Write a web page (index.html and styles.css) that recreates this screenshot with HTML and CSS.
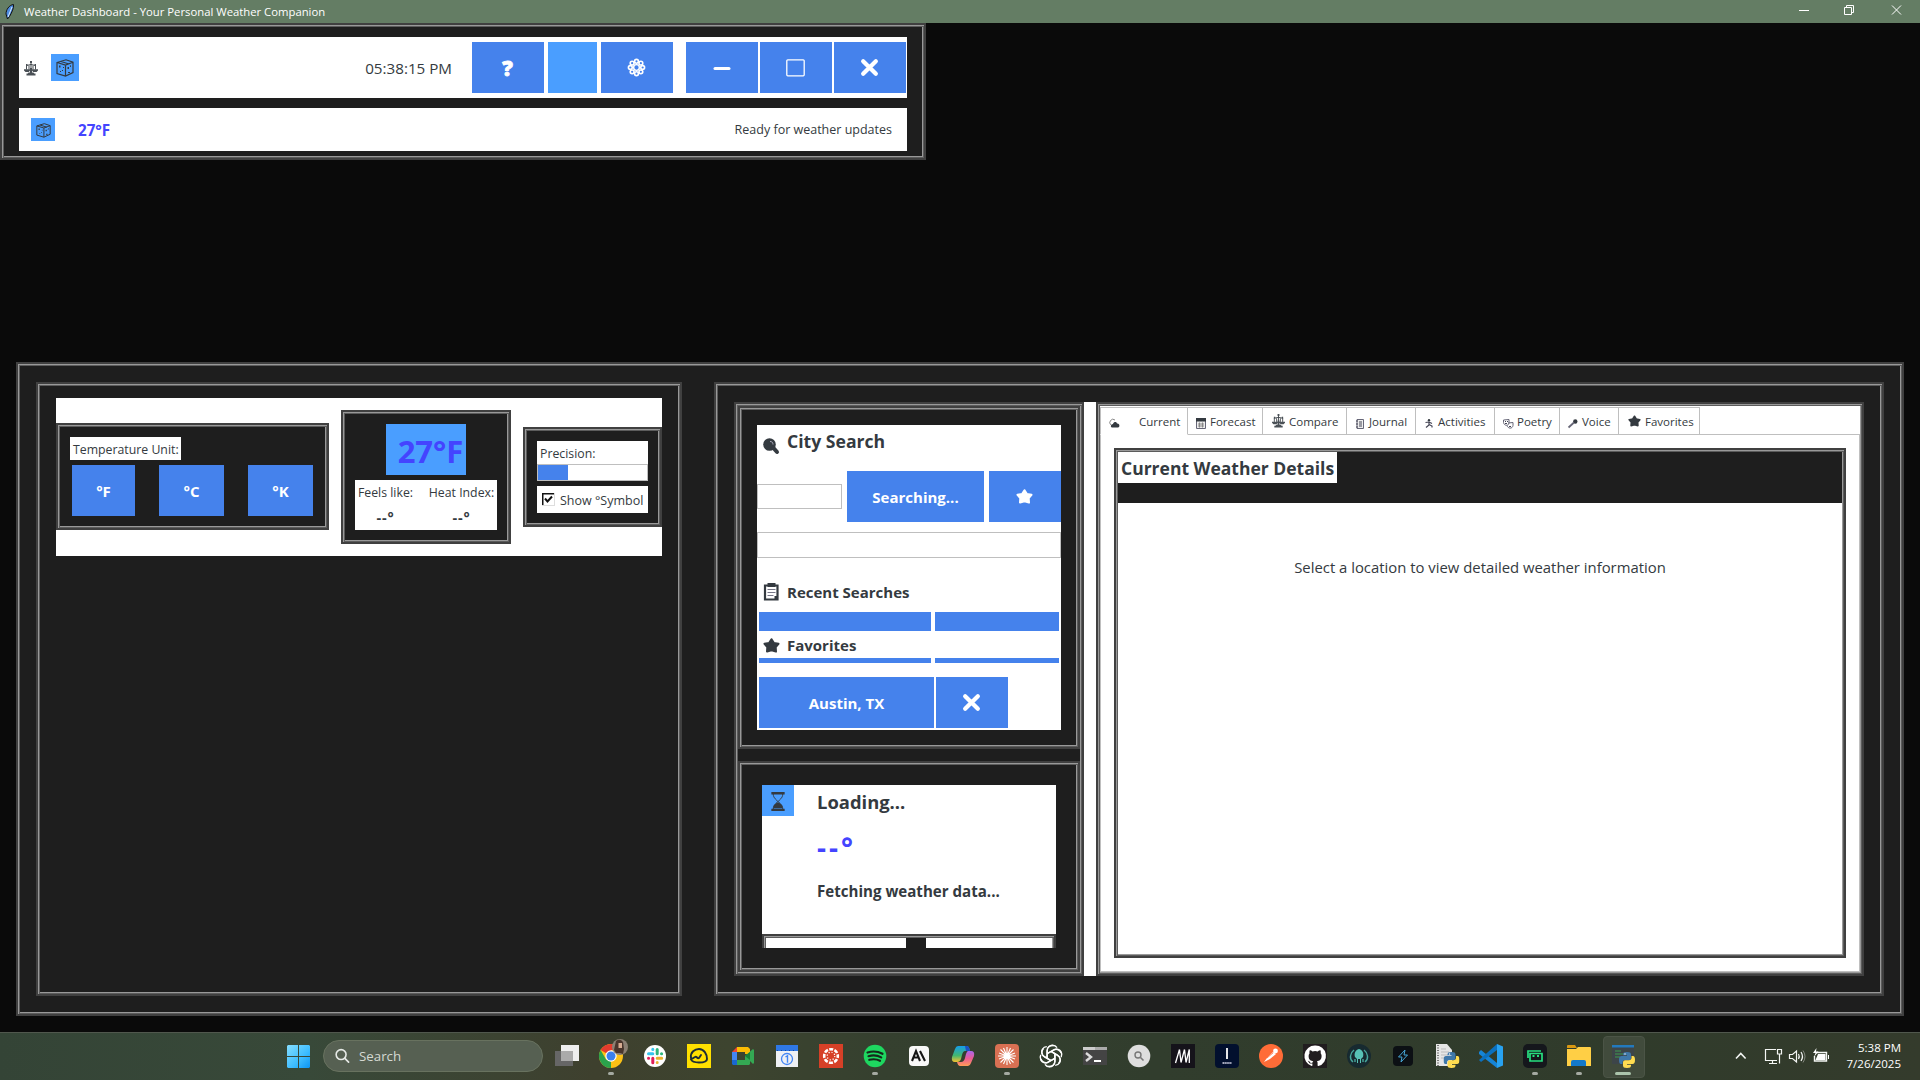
FILE: index.html
```html
<!DOCTYPE html>
<html lang="en">
<head>
<meta charset="utf-8">
<title>Weather Dashboard - Your Personal Weather Companion</title>
<link rel="stylesheet" href="styles.css">
</head>
<body>
<svg class="defs" aria-hidden="true">
  <symbol id="cube" viewBox="0 0 18 18"><path d="M1 3.500 10 .8 17 3.200V13.500L9.500 17 1 14.500ZM1 3.500 9.500 6 17 3.200M9.500 6V17M5 2.500 13 5" fill="none" stroke="#343a40" stroke-width="1.200"/><path d="M3 6.500h1.500v2H3zM6 11h1v1H6zM4 12h1v1H4zM11.500 8H13v2h-1.500zM14.500 6H15v2h-1zM12 13h2v1h-2zM7 8h1v1H7z" fill="#343a40"/></symbol>
  <symbol id="scales" viewBox="0 0 14 15"><path d="M7 1v10M2.500 4.500 7 3.500l4.500 1M2.500 4.500v4M11.500 4.500v4M5 4.500v4M9 4.500v4" fill="none" stroke="#343a40" stroke-width=".9"/><path d="M6 0h2v2H6zM2 3h1.500v2H2zM10.500 3H12v2h-1.500zM0 8.300h6V9.500L4.800 11H1.500L0 9.500zM8 8.300h6v1.200L12.500 11H9.200L8 9.500zM4.500 11.500h5l.7 1h1.300V14.500h-9V12.500h1.300zM6 7h2v5H6z" fill="#4a5056"/></symbol>
  <symbol id="star" viewBox="0 0 17 15"><path d="M8.500 1.200 10.800 4.900 15.500 5.800 12.700 9.200 13 13.600 8.500 12.400 4 13.600 4.300 9.200 1.500 5.800 6.200 4.900Z" fill="currentColor" stroke="currentColor" stroke-width="2" stroke-linejoin="round"/></symbol>
  <symbol id="cross" viewBox="0 0 18 18"><path d="M3 3 15 15M15 3 3 15" fill="none" stroke="#fff" stroke-width="4" stroke-linecap="round"/></symbol>
  <symbol id="python" viewBox="0 0 16 16"><path d="M8 0c3 0 4 .8 4 2.500V6c0 1.500-1 2-2 2H6c-1.500 0-2.500 1-2.500 2.500V12H2C.6 12 0 10.500 0 8s.8-4 2.500-4H8V3.300H4V2.500C4 .8 5 0 8 0" fill="#3f78aa"/><path d="M8 16c-3 0-4-.8-4-2.500V10.500C4 9 5 8.300 6 8.300h4C11.500 8.300 12.500 7 12.500 5.800V4H14c1.400 0 2 1.500 2 4s-.8 4-2.500 4H8v.7h4v.8C12 15.200 11 16 8 16" fill="#ffdc50"/><circle cx="6" cy="2" r=".7" fill="#fff"/></symbol>
</svg>

<header class="titlebar">
  <svg class="feather" viewBox="0 0 10 16"><path d="M2.500 15 1 10C1 6 4 1 8.500.5 9 4 7 8 4.500 12.500Z" fill="#4c8be0" stroke="#111" stroke-width="1"/><path d="M3 13 7 3" stroke="#dcecff" stroke-width="1"/></svg>
  <span class="titlebar-text">Weather Dashboard - Your Personal Weather Companion</span>
  <svg class="caption" viewBox="0 0 102 12"><path d="M0 6.500h10M93 1.500l9 9M102 1.500l-9 9" stroke="#fff" fill="none"/><path d="M45.500 3.500h7v7h-7zM47.500 3V1.500h7V8.500H53" stroke="#fff" fill="none"/></svg>
</header>

<section class="groove header">
  <div class="toolbar">
    <svg class="tool-scales"><use href="#scales"/></svg>
    <span class="chip chip-lg"><svg><use href="#cube"/></svg></span>
    <span class="clock">05:38:15 PM</span>
    <div class="tools">
      <button class="btn sq"><b class="question">?</b></button>
      <span class="swatch"></span>
      <button class="btn sq"><svg class="flower" width="19" height="19" viewBox="0 0 20 20" fill="none" stroke="#fff"><circle cx="10" cy="10" r="3" stroke-width="1.500"/><g stroke-width="1.700"><circle cx="10" cy="3.500" r="2"/><circle cx="14.600" cy="5.400" r="2"/><circle cx="16.500" cy="10" r="2"/><circle cx="14.600" cy="14.600" r="2"/><circle cx="10" cy="16.500" r="2"/><circle cx="5.400" cy="14.600" r="2"/><circle cx="3.500" cy="10" r="2"/><circle cx="5.400" cy="5.400" r="2"/></g></svg></button>
    </div>
    <div class="window-tools">
      <button class="btn sq"><svg width="18" height="18" viewBox="0 0 18 18"><path d="M2 9.500h14" stroke="#fff" stroke-width="3" stroke-linecap="round"/></svg></button>
      <button class="btn sq"><svg class="box" width="19" height="18" viewBox="0 0 19 18"><rect x=".8" y=".8" width="17.400" height="16" rx="1" fill="none" stroke="#fff" stroke-width="1.300"/></svg></button>
      <button class="btn sq"><svg class="cross" width="19" height="19"><use href="#cross"/></svg></button>
    </div>
  </div>
  <div class="statusbar">
    <span class="chip chip-sm"><svg><use href="#cube"/></svg></span>
    <span class="status-temp">27°F</span>
    <span class="status-text">Ready for weather updates</span>
  </div>
</section>

<main class="groove dashboard">
  <section class="groove left-panel">
    <div class="controls">
      <div class="groove units">
        <span class="label unit-label">Temperature Unit:</span>
        <div class="unit-row">
          <button class="btn unit-f">°F</button><button class="btn unit">°C</button><button class="btn unit">°K</button>
        </div>
      </div>
      <div class="groove reading">
        <div class="big-temp">27°F</div>
        <div class="feels">
          <span class="small">Feels like:</span><span class="small">Heat Index:</span>
          <b class="dash">--°</b><b class="dash">--°</b>
        </div>
      </div>
      <div class="groove precision">
        <div class="label precision-label">Precision:</div>
        <div class="meter"><i></i></div>
        <div class="check-row">
          <svg width="13" height="13" viewBox="0 0 13 13"><path d="M0 0h13v13H0z" fill="#ddd"/><path d="M0 0h12v12H0z" fill="#111"/><path d="M1.500 1.500H12V12H1.500z" fill="#fff"/><path d="M3 5.500 5.500 8.500 10 3.500" fill="none" stroke="#111" stroke-width="2"/></svg>
          <span>Show °Symbol</span>
        </div>
      </div>
    </div>
  </section>

  <section class="groove right-panel">
    <div class="groove side">
      <div class="groove search-frame">
        <div class="search-card">
          <div class="heading h-city"><svg width="18" height="16" viewBox="0 0 18 16"><circle cx="6.500" cy="6.500" r="6.300" fill="#343a40"/><path d="m10.500 10 3.500 4" stroke="#343a40" stroke-width="4" stroke-linecap="round"/><path d="M7 3.500c2 0 3 1 3 3" stroke="#aab" fill="none"/></svg><span>City Search</span></div>
          <div class="search-row"><span class="entry"></span><button class="btn searching">Searching...</button><button class="btn sq"><svg class="white-star"><use href="#star"/></svg></button></div>
          <div class="listbox"></div>
          <div class="heading h-recent"><svg width="18" height="18" viewBox="0 0 18 18"><path d="M2 2.500h12.500v14H2z" fill="#fff" stroke="#343a40" stroke-width="2.200"/><path d="M4.500 0h8v4h-8zM11.500 13h3v3h-3z" fill="#343a40"/><path d="M4.500 6.500h8M4.500 9.500h8M4.500 12.500h6" stroke="#778"/></svg><span>Recent Searches</span></div>
          <div class="bars tall"><i></i><i></i></div>
          <div class="heading h-fav"><svg class="dark-star"><use href="#star"/></svg><span>Favorites</span></div>
          <div class="bars thin"><i></i><i></i></div>
          <div class="fav-row"><button class="btn city">Austin, TX</button><button class="btn sq"><svg class="cross" width="19" height="19"><use href="#cross"/></svg></button></div>
        </div>
      </div>
      <div class="groove weather-frame">
        <div class="weather-card">
          <span class="hourglass"><svg width="14" height="19" viewBox="0 0 14 20"><path d="M0 0h14v2.500H0zM0 17.500h14V20H0zM2 17c0-4 3-5 4.500-6h1C9 12 12 13 12 17z" fill="#343a40"/><path d="M2 2c0 5 4 6 4.500 8C6 12 2 13 2 18M12 2c0 5-4 6-4.500 8 .5 2 4.500 3 4.500 8" fill="none" stroke="#343a40"/></svg></span>
          <div class="loading">
            <span class="loading-title">Loading...</span>
            <span class="loading-temp">--°</span>
            <span class="loading-text">Fetching weather data...</span>
          </div>
        </div>
        <div class="metrics"><i></i><i></i></div>
      </div>
    </div>

    <div class="groove notebook">
      <nav class="tabs">
        <span class="tab current"><svg width="10" height="9" viewBox="0 0 10 9"><path d="M1 6A3 3 0 0 1 5 1" fill="none" stroke="#888"/><path d="M2 8.500C0 8 1 5 3 5c1-3 4-2 4-.5 3-.5 3 4 1 4z" fill="#343a40"/></svg><span>Current</span></span>
        <span class="tab forecast"><svg width="10" height="11" viewBox="0 0 10 11"><path d="M.5 1h9v9.500h-9z" fill="#eee" stroke="#667"/><path d="M0 0h10v3.500H0z" fill="#343a40"/><path d="M2 6h6M2 8h6M3.500 4.500v5M6.500 4.500v5" stroke="#888"/></svg><span>Forecast</span></span>
        <span class="tab compare"><svg width="13" height="14"><use href="#scales"/></svg><span>Compare</span></span>
        <span class="tab journal"><svg width="8" height="10" viewBox="0 0 8 10"><path d="M1 .5h6.500v9H1z" fill="#eee" stroke="#667"/><path d="M0 2h2M0 5h2M0 8h2M3 3h3M3 5h3M3 7h3" stroke="#445"/></svg><span>Journal</span></span>
        <span class="tab activities"><svg width="9" height="9" viewBox="0 0 9 9"><circle cx="4" cy="1.300" r="1.200" fill="#343a40"/><path d="M.5 3.500 4 3l3 1.500M4 3v3L1 8.500M4 5.500 7 7v1.500" fill="none" stroke="#445" stroke-width="1.200"/></svg><span>Activities</span></span>
        <span class="tab poetry"><svg width="11" height="10" viewBox="0 0 11 10"><path d="M.5 1 6 .5v3c0 4-5 3.500-5.500 0zM5 4l5-.5v3C9.500 10 5 10 4 6.500" fill="#fff" stroke="#667"/><path d="M2 2.500h1M4 2.500h1M2 4.500h2M6 7.500h2" stroke="#445"/></svg><span>Poetry</span></span>
        <span class="tab voice"><svg width="10" height="9" viewBox="0 0 10 9"><circle cx="7.300" cy="2.500" r="2.200" fill="#343a40"/><path d="M.5 8.500 6 3.500" stroke="#667" stroke-width="1.800"/></svg><span>Voice</span></span>
        <span class="tab favs"><svg width="13" height="12"><use href="#star"/></svg><span>Favorites</span></span>
        <span class="tab-fill"></span>
      </nav>
      <div class="page">
        <div class="groove details">
          <div class="details-head"><h2>Current Weather Details</h2></div>
          <p class="placeholder">Select a location to view detailed weather information</p>
        </div>
      </div>
    </div>
  </section>
</main>

<footer class="taskbar">
  <svg class="start" viewBox="0 0 23 23"><defs><linearGradient id="win" x1="0" y1="0" x2="23" y2="23" gradientUnits="userSpaceOnUse"><stop stop-color="#85deff"/><stop offset=".6" stop-color="#3cbcff"/><stop offset="1" stop-color="#0c94f4"/></linearGradient></defs><path d="M1 0h10v11H0V1zM12 0h10l1 1v10H12zM0 12h11v11H1l-1-1zM12 12h11v10l-1 1H12z" fill="url(#win)"/></svg>
  <div class="search-pill"><svg width="15" height="16" viewBox="0 0 16 16"><circle cx="6.500" cy="6.500" r="5.300" fill="none" stroke="#e6e9e6" stroke-width="1.700"/><path d="m10.500 10.500 4 4" stroke="#e6e9e6" stroke-width="1.800" stroke-linecap="round"/></svg><span>Search</span></div>
  <div class="apps">
    <span class="app"><svg viewBox="0 0 24 24"><path d="M6 1h18v16H6z" fill="#eee"/><path d="M0 7h18v15H0z" fill="#666"/><path d="M6 7h12v10H6z" fill="#aaa"/></svg></span>
    <span class="app run"><svg viewBox="0 0 24 24"><circle cx="12" cy="12" r="12" fill="#fbc116"/><path d="M12 12 1.600 6A12 12 0 0 1 22.400 6H12z" fill="#e33b2e"/><path d="M1.600 6 7 15.500l5 2L12 24A12 12 0 0 1 1.600 6" fill="#2ba24c"/><circle cx="12" cy="12" r="5.700" fill="#fff"/><circle cx="12" cy="12" r="4.500" fill="#3b80ee"/><circle cx="21" cy="3" r="8" fill="#8b8074"/><path d="M17-3q4-3 7 1l1 7-1 5-3-1-4 0-2-3z" fill="#49352c"/><path d="M19.500-1h3.500v5h-3.500z" fill="#d6ac92"/></svg></span>
    <span class="app"><svg viewBox="0 0 24 24"><circle cx="12" cy="12" r="11" fill="#fff"/><g stroke-width="3" stroke-linecap="round"><path d="M5.500 9.800h4.300M9.800 5.300v.1" stroke="#36c5f0"/><path d="M14.200 5.500v4.300M18.500 9.800h.1" stroke="#2eb67d"/><path d="M14.200 14.200h4.500M14.200 18.500v.1" stroke="#ecb22e"/><path d="M9.800 14.200v4.500M5.500 14.200h.1" stroke="#e01e5a"/></g></svg></span>
    <span class="app"><svg viewBox="0 0 24 24"><path d="M0 0h24v24H0z" fill="#ffe000"/><path d="M4 14C3 8 8 5 12 5c5 0 8 5 8 10 0 3-3 3.500-8 3.500-4 0-7-.5-8-3l4-2.500c2-1 2 2 4 1l2-3" fill="none" stroke="#1d2d35" stroke-width="1.900" stroke-linecap="round"/></svg></span>
    <span class="app"><svg viewBox="0 0 24 24"><path d="M1 8 6 3v5z" fill="#ea4335"/><path d="M6 3h11l2 2v5h-5V8H6z" fill="#fbbc04"/><path d="M1 8h5v8H1z" fill="#4285f4"/><path d="M1 16h5v5H2l-1-1z" fill="#1967d2"/><path d="M6 16h8v-4h5v8l-1 1H6zM14 12l8-7 1 1v13l-1 1z" fill="#34a853"/><path d="m14 12 5-4v8z" fill="#188038"/></svg></span>
    <span class="app"><svg viewBox="0 0 24 24"><path d="M1 6h22v17H1z" fill="#eef0f4"/><path d="M1 1h22v6H1z" fill="#2f78e6"/><path d="M2 6.500h20" stroke="#194a9c" stroke-dasharray="1 3"/><circle cx="12" cy="15" r="5.500" fill="none" stroke="#4285f4" stroke-width="1.300"/><path d="m10.500 13 2-1.300v7" fill="none" stroke="#4285f4" stroke-width="1.400"/></svg></span>
    <span class="app"><svg viewBox="0 0 24 24"><path d="M0 0h24v24H0z" fill="#d64027"/><circle cx="12" cy="12" r="6.800" fill="none" stroke="#fff" stroke-width="2.600" stroke-dasharray="4 1.340" stroke-dashoffset="2"/><circle cx="12" cy="12" r="3.800" fill="none" stroke="#fff" stroke-width="1.200" stroke-dasharray="1.200 1.784"/></svg></span>
    <span class="app run"><svg viewBox="0 0 24 24"><circle cx="12" cy="12" r="11.300" fill="#1ed760"/><path d="M4.500 8.500q8-2.500 15 1.300M5.500 12.200q7-2 12.700 1.200M6.300 15.800q6-1.500 10.700 1" fill="none" stroke="#15291b" stroke-width="2.200" stroke-linecap="round"/></svg></span>
    <span class="app"><svg viewBox="0 0 24 24"><rect x="2" y="2" width="20" height="20" rx="4" fill="#f8f8f8"/><path d="m5 17 4-10 4 10M6.500 13.500h5M13 7l5 10" fill="none" stroke="#161616" stroke-width="2.100"/></svg></span>
    <span class="app"><svg viewBox="0 0 24 24"><defs><linearGradient id="cpa" x2="0" y2="1"><stop stop-color="#159dea"/><stop offset=".6" stop-color="#43b86f"/><stop offset="1" stop-color="#f8c130"/></linearGradient><linearGradient id="cpb" x2="0" y2="1"><stop stop-color="#a866ed"/><stop offset=".5" stop-color="#eb5b94"/><stop offset="1" stop-color="#ff9c55"/></linearGradient></defs><path d="M7 2h9q2 0 3 5h-5q-2 0-3 4l-1 4q-1 3-4 3H4q-4 0-3-5L4 5q1-3 3-3" fill="url(#cpa)"/><path d="M14 2h2q2 0 3 5h-4z" fill="#1b50c5"/><path d="M17 7h3q4 0 3 5l-3 7q-1 3-3 3H9q-2 0-3-4h4q3 0 4-4l1-4q1-3 2-3" fill="url(#cpb)"/></svg></span>
    <span class="app run"><svg viewBox="0 0 24 24"><rect width="24" height="24" rx="4" fill="#d97053"/><path d="M12 3v18M3 12h18M5.500 5.500l13 13M18.500 5.500l-13 13M8.500 4l7 16M15.500 4l-7 16M4 9l16 6M4 15l16-6" stroke="#fff" stroke-width="1.100"/></svg></span>
    <span class="app"><svg viewBox="0 0 24 24"><g fill="none" stroke="#fff" stroke-width="1.400"><path id="petal" d="M8.200 14V6.500C8.200 3 11 1.200 13.500 1.200c2 0 3.600 1 4.500 2.500M8.200 9.500 14.500 6c3.500-2 7 .5 7.600 3"/><use href="#petal" transform="rotate(60 12 12)"/><use href="#petal" transform="rotate(120 12 12)"/><use href="#petal" transform="rotate(180 12 12)"/><use href="#petal" transform="rotate(240 12 12)"/><use href="#petal" transform="rotate(300 12 12)"/></g></svg></span>
    <span class="app"><svg viewBox="0 0 24 24"><path d="M0 3h24v18H0z" fill="#444"/><path d="M0 3h24v3H0z" fill="#aaa"/><path d="M0 3h12v3H0z" fill="#ccc"/><path d="m3 9 5 4-5 4" fill="none" stroke="#ddd" stroke-width="2.400"/><path d="M11 17h7" stroke="#fff" stroke-width="2"/></svg></span>
    <span class="app"><svg viewBox="0 0 24 24"><circle cx="12" cy="12" r="11.300" fill="#dedede"/><circle cx="11" cy="11" r="3" fill="none" stroke="#777" stroke-width="1.400"/><path d="m13.500 13.500 3 3" stroke="#777" stroke-width="1.600"/></svg></span>
    <span class="app"><svg viewBox="0 0 24 24"><path d="M0 0h24v24H0z" fill="#15131a"/><path d="M4.500 19 8.500 5.500M10 18.500 13.500 5.500M8.500 5.500 10 18.500M13.500 5.500 15 18.500M15 18.500l3.300-13V19" fill="none" stroke="#fff" stroke-width="1.300"/></svg></span>
    <span class="app"><svg viewBox="0 0 24 24"><rect width="24" height="24" rx="4" fill="#02102e"/><path d="M12 4v11" stroke="#fff" stroke-width="1.800"/><path d="M7.500 19h9" stroke="#dde" stroke-width="1.500" stroke-dasharray="1.500 .4"/></svg></span>
    <span class="app"><svg viewBox="0 0 24 24"><circle cx="12" cy="12" r="12" fill="#ff6c37"/><path d="m5 18 3-4 6-6 3 2-6 5z" fill="#fff"/><circle cx="16.500" cy="7" r="2.400" fill="#fff"/><path d="m8 14 6-5" stroke="#ff6c37" stroke-width=".7"/></svg></span>
    <span class="app"><svg viewBox="0 0 24 24"><path d="M0 0h24v24H0z" fill="#211d1f"/><path d="M12 1.500a10.500 10.500 0 0 0-3.300 20.500c.5.100.7-.2.700-.5v-2c-3 .6-3.600-1.300-3.600-1.300-.5-1.200-1.200-1.500-1.200-1.500 1.500-.2 2 1 2 1 1 1.600 2.500 1.200 3 .9 0-.7.400-1.200.7-1.500-2.400-.3-4.700-1.200-4.700-5.100 0-1.200.4-2 1-2.800-.1-.4-.4-1.400.1-2.800 0 0 1-.3 2.800 1a10 10 0 0 1 5.200 0c1.900-1.300 2.800-1 2.800-1 .5 1.400.2 2.400.1 2.800.6.800 1 1.600 1 2.800 0 4-2.400 4.800-4.700 5.100.4.400.7 1 .7 2v2.500c0 .3.200.6.700.5A10.500 10.500 0 0 0 12 1.500" fill="#fff"/></svg></span>
    <span class="app"><svg viewBox="0 0 24 24"><circle cx="12" cy="12" r="12" fill="#172a30"/><path d="M8 13c-1-3 0-7 4-8 4 1 5 5 4 8l-2 2v4h-1v-4h-2v4h-1v-4z" fill="#57c2b6"/><path d="M7 6c-4 3-5 9-1 12M17 6c4 3 5 9 1 12M8 15v3M16 15v3" fill="none" stroke="#47a69c" stroke-width="1.400"/></svg></span>
    <span class="app"><svg viewBox="0 0 24 24"><rect x="2" y="2" width="20" height="20" rx="4" fill="#0c1014"/><path d="M14 6 7.500 13H11l-1 5 6.500-7H13z" fill="none" stroke="#46a6d6"/></svg></span>
    <span class="app"><svg viewBox="0 0 24 24"><path d="M1 0h11l5 6v16H1z" fill="#e6e6e6"/><path d="M3 1v21" stroke="#777" stroke-dasharray="1 1.500" stroke-width="2"/><path d="M6 8h8M6 11h7M6 14h4M6 5h5" stroke="#bbb"/><use href="#python" x="8.500" y="8" width="16" height="16"/></svg></span>
    <span class="app"><svg viewBox="0 0 24 24"><path d="M0 8 2 6l16 13v5L0 10z" fill="#1684d6"/><path d="M0 16 18 0v6L2 18z" fill="#0b70bf"/><path d="m18 0 6 2.500v19L18 24z" fill="#28a2f1"/></svg></span>
    <span class="app run"><svg viewBox="0 0 24 24"><rect width="24" height="24" rx="5" fill="#15171c"/><path d="M5 14V7h13M7 9.500h12V17H7z" fill="none" stroke="#26e07f" stroke-width="1.700"/><path d="M9.500 12h2M14 12h2" stroke="#26e07f" stroke-width="1.800"/></svg></span>
    <span class="app run"><svg viewBox="0 0 24 24"><path d="M0 2q0-1 1-1h7l2 3h-10z" fill="#d89812"/><path d="M0 5h9l2-2h12q1 0 1 1v18H0z" fill="#ffcf45"/><path d="M4 22v-4q0-2 2-2h11q2 0 2 2v4z" fill="#1479cb"/></svg></span>
    <span class="app run active"><svg viewBox="0 0 24 24"><path d="M1 1h22v19H1z" fill="#3d4549"/><path d="M1 1h22v2.500H1z" fill="#2379bd"/><path d="M4 7h6M4 10h9M4 13h5" stroke="#3e7f4d" stroke-width="1.300"/><use href="#python" x="8" y="8" width="16" height="16"/></svg></span>
  </div>
  <svg class="tray" viewBox="0 0 94 18" fill="none" stroke="#f4f6f4"><path d="m1 11.500 4.800-5 4.800 5" stroke-width="1.600"/><path d="M41 2.500H30.500v11H42M37.500 13.500v3M34 16.500h8M42.500 2.500h4v4.500h-4zM44.500 7v9.500" stroke-width="1.200"/><path d="M54.500 7.500h3l4-3.500v11l-4-3.500h-3zM63.500 7q1.500 2.500 0 5M66 5q3 4.500 0 9" stroke-width="1.200"/><path d="M68 3.500q4 6 0 12" opacity=".4"/><path d="M82 5.500h9.500v8.500H79.500v-5" stroke-width="1.400"/><path d="M83 7h7.500v6h-10zM93 8h1v4h-1z" fill="#fff" stroke="none"/><path d="m81.500 1-3.500 5h2.500l-1.500 4 4.500-5.500h-2.500z" fill="#fff" stroke="none"/></svg>
  <div class="datetime"><span>5:38 PM</span><span>7/26/2025</span></div>
</footer>
</body>
</html>
```
FILE: styles.css
```css
* { box-sizing: border-box; }

body {
  margin: 0;
  width: 1920px;
  height: 1080px;
  overflow: hidden;
  display: flex;
  flex-direction: column;
  background: #0a0a0a;
  color: #343a40;
  font-family: "Open Sans", "Noto Sans", sans-serif;
  font-size: 12.3px;
}

svg { display: block; flex: none; overflow: visible; }
.defs { width: 0; height: 0; position: absolute; }
span { white-space: nowrap; }
i { display: block; }

/* Etched frame: two solid pixels, then a light and a mid line */
.groove {
  border: 2px solid #404040;
  background: #1e1e1e;
  box-shadow: inset 1px 1px #999, inset -1px -1px #5c5c5c, inset 2px 2px #5c5c5c, inset -2px -2px #999;
}

.btn {
  height: 51px;
  border: 0;
  padding: 0;
  flex: none;
  display: flex;
  align-items: center;
  justify-content: center;
  background: #4582ec;
  color: #fff;
  font: 700 15px "Open Sans", "Noto Sans", sans-serif;
}
.sq { width: 72px; }
.cross, .box, .flower { margin-right: 1px; }

/* Title bar */
.titlebar {
  height: 23px;
  flex: none;
  display: flex;
  align-items: center;
  background: #647d64;
  color: #fff;
  font-size: 11.3px;
}
.feather { width: 10px; height: 16px; margin: 0 9px 0 5px; }
.titlebar-text { flex: 1; }
.caption { width: 102px; height: 12px; margin: 0 19px 3px 0; }

/* Header */
.header {
  width: 926px;
  height: 137px;
  flex: none;
  padding: 12px 17px 7px;
  display: flex;
  flex-direction: column;
  gap: 10px;
}
.toolbar {
  height: 61px;
  padding: 5px 1px 5px 5px;
  display: flex;
  align-items: center;
  background: #fff;
}
.tool-scales { width: 14px; height: 15px; margin: 1px 13px 0 0; }
.chip { display: flex; align-items: center; justify-content: center; background: #4a9eff; }
.chip-lg { width: 28px; height: 27px; }
.chip-lg svg { width: 18px; height: 18px; margin-top: 1px; }
.chip-sm { width: 24px; height: 23px; }
.chip-sm svg { width: 15px; height: 15px; margin-top: 1px; }
.clock { margin-left: auto; margin-right: 20px; font-size: 15.2px; }
.tools { display: flex; gap: 4px; margin-right: 13px; }
.window-tools { display: flex; gap: 2px; }
.swatch { width: 49px; background: #4a9eff; }
.question { font-size: 21px; margin-right: 1px; -webkit-text-stroke: .8px #fff; }
.statusbar {
  height: 43px;
  padding: 0 15px 0 12px;
  display: flex;
  align-items: center;
  background: #fff;
}
.status-temp { flex: 1; margin-left: 23px; color: #4444ff; font-weight: 700; font-size: 15.2px; }
.status-text { font-size: 12.5px; }

/* Main */
.dashboard {
  width: 1888px;
  height: 654px;
  flex: none;
  margin: 202px 0 16px 16px;
  padding: 18px;
  display: flex;
  gap: 32px;
}
.left-panel { width: 646px; height: 614px; padding: 14px 18px; }
.controls {
  height: 158px;
  display: flex;
  align-items: center;
  justify-content: space-between;
  background: #fff;
}
.label { height: 23px; padding: 0 3px; display: flex; align-items: center; background: #fff; }
.units { width: 273px; height: 107px; margin-bottom: 1px; padding: 12px; }
.unit-label { width: 111px; padding-top: 1px; }
.precision-label { padding-top: 2px; }
.unit-row { display: flex; gap: 24px; padding: 5px 2px; }
.unit-f { width: 63px; }
.unit { width: 65px; }
.reading {
  width: 170px;
  height: 134px;
  padding: 12px;
  display: flex;
  flex-direction: column;
  align-items: center;
  gap: 5px;
}
.big-temp {
  width: 80px;
  height: 51px;
  padding: 2px 0 0 9px;
  display: flex;
  align-items: center;
  justify-content: center;
  background: #4a9eff;
  color: #4444ff;
  font-size: 31px;
  font-weight: 700;
}
.feels {
  width: 142px;
  height: 50px;
  padding: 0 3px;
  display: grid;
  grid-template: 25px 25px / 55px 65px;
  justify-content: space-between;
  align-items: center;
  justify-items: center;
  background: #fff;
}
.dash { font-size: 14.5px; letter-spacing: .9px; }
.precision { width: 139px; height: 100px; padding: 12px; }
.meter { height: 17px; border: 1px solid #bfbfbf; background: #fff; }
.meter i { width: 30px; height: 15px; background: #4582ec; }
.check-row {
  height: 27px;
  margin-top: 5px;
  padding-left: 5px;
  display: flex;
  align-items: center;
  gap: 5px;
  background: #fff;
}
.check-row span { padding-top: 2px; font-size: 12.5px; }

.right-panel { width: 1170px; height: 614px; padding: 18px; display: flex; }
.side {
  width: 350px;
  padding: 2px;
  display: flex;
  flex-direction: column;
  gap: 12px;
}
.search-frame { height: 343px; padding: 17px; }
.search-card { width: 304px; height: 305px; background: #fff; }
.heading { display: flex; align-items: center; font-weight: 700; font-size: 15px; }
.heading svg { margin: 0 6px; }
.h-city { height: 36px; font-size: 17.6px; margin-bottom: 10px; }
.h-city svg { margin-top: 5px; }
.h-city span { margin-bottom: 5px; }
.search-row { display: flex; align-items: center; justify-content: space-between; }
.entry { width: 85px; height: 25px; border: 1px solid #bfbfbf; }
.searching { width: 137px; }
.white-star { width: 17px; height: 15px; margin-right: 1px; color: #fff; }
.listbox { height: 26px; margin-top: 10px; border: 1px solid #bfbfbf; }
.h-recent { height: 40px; margin-top: 14px; }
.bars { display: flex; gap: 4px; padding: 0 2px; }
.bars i { width: 172px; background: #4582ec; }
.bars i + i { width: 124px; }
.tall i { height: 19px; }
.thin i { height: 5px; }
.h-fav { height: 27px; padding-top: 2px; }
.h-fav span { margin-bottom: 2px; }
.h-fav .dark-star { width: 17px; height: 15px; margin: 0 7px 1px 6px; color: #343a40; }
.fav-row { display: flex; gap: 2px; padding: 14px 2px 2px; }
.city { width: 175px; }

.weather-frame { height: 211px; padding: 22px; }
.weather-card { height: 149px; display: flex; gap: 23px; background: #fff; }
.hourglass { width: 32px; height: 31px; padding-top: 1px; display: flex; align-items: center; justify-content: center; background: #4a9eff; }
.loading { display: flex; flex-direction: column; font-weight: 700; }
.loading-title { height: 33px; line-height: 33px; font-size: 18.4px; }
.loading-temp { height: 57px; line-height: 58px; color: #4444ff; font-size: 28px; letter-spacing: 3px; }
.loading-text { height: 32px; line-height: 32px; font-size: 15.1px; }
.metrics {
  height: 14px;
  border: 2px solid #404040;
  border-bottom: 0;
  padding: 2px 2px 0;
  display: flex;
  justify-content: space-between;
  box-shadow: inset 1px 1px #999, inset -1px 0 #5c5c5c, inset 2px 2px #5c5c5c, inset -2px 0 #999;
}
.metrics i { width: 140px; background: #fff; }
.metrics i + i { width: 126px; }

.notebook {
  width: 768px;
  position: relative;
  margin-left: 12px;
  padding: 2px;
  display: flex;
  flex-direction: column;
  background: #fff;
}
/* White sash between the two panes */
.notebook::before {
  content: "";
  position: absolute;
  left: -14px;
  top: -2px;
  width: 12px;
  height: 574px;
  background: #fff;
}
.tabs { height: 29px; padding-top: 1px; display: flex; font-size: 11.5px; }
.tab {
  height: 28px;
  flex: none;
  display: flex;
  align-items: center;
  border: 1px solid #bfbfbf;
  border-left: 0;
}
.tab span { padding-top: 1px; }
.tab svg { margin-top: 5px; }
.tab.current { width: 88px; padding-left: 9px; gap: 19px; border-left: 1px solid #bfbfbf; border-bottom-color: #fff; }
.tab.forecast { width: 75px; padding-left: 8px; gap: 4px; }
.tab.compare { width: 84px; padding-left: 9px; gap: 4px; }
.tab.compare svg, .tab.favs svg { margin-top: 0; }
.tab.journal { width: 69px; padding-left: 9px; gap: 5px; }
.tab.activities { width: 79px; padding-left: 9px; gap: 4px; }
.tab.poetry { width: 65px; padding-left: 8px; gap: 3px; }
.tab.voice { width: 59px; padding-left: 8px; gap: 4px; }
.tab.favs { width: 81px; padding-left: 9px; gap: 4px; }
.tab-fill { flex: 1; border-bottom: 1px solid #bfbfbf; }
.page { flex: 1; padding: 13px; border: 1px solid #bfbfbf; border-top: 0; }
.details { height: 510px; padding: 2px; background: #fff; }
.details-head { height: 51px; background: #1e1e1e; display: flex; align-items: flex-start; }
h2 {
  margin: 0;
  width: 219px;
  height: 31px;
  line-height: 32px;
  padding-left: 3px;
  background: #fff;
  font-size: 17.5px;
  white-space: nowrap;
}
.placeholder { margin: 53px 0 0; text-align: center; font-size: 14.86px; line-height: 22px; }

/* Taskbar */
.taskbar {
  height: 48px;
  flex: none;
  padding: 0 19px 0 287px;
  display: flex;
  align-items: center;
  border-top: 1px solid #50574d;
  background: linear-gradient(90deg, #344436 0, #384939 16%, #3e402e 31%, #3d442f 38%, #35402f 46%, #313d2d 60%, #303b2b 85%, #343b2c 100%);
  color: #fff;
}
.start { width: 23px; height: 23px; }
.search-pill {
  width: 220px;
  height: 32px;
  margin: 0 2px 1px 13px;
  padding-left: 11px;
  display: flex;
  align-items: center;
  gap: 9px;
  border: 1px solid #68725f;
  border-radius: 16px;
  background: #566052;
  color: #d5d9d3;
  font-size: 13.3px;
}
.apps { display: flex; height: 47px; flex: 1; }
.app { width: 44px; padding-bottom: 1px; display: flex; align-items: center; justify-content: center; position: relative; }
.app svg { width: 24px; height: 24px; }
.run::after {
  content: "";
  position: absolute;
  left: 19px;
  bottom: 5px;
  width: 6px;
  height: 3px;
  border-radius: 2px;
  background: #a5aaa2;
}
.active::before {
  content: "";
  position: absolute;
  left: 2px;
  top: 3px;
  width: 40px;
  height: 40px;
  border: 1px solid #4b5446;
  border-radius: 4px;
  background: #414b3c;
}
.active svg { position: relative; }
.active::after { left: 14px; width: 16px; background: #abc4ab; }
.tray { width: 94px; height: 18px; margin: 0 12px 2px 0; }
.datetime { width: 60px; padding-bottom: 1px; display: flex; flex-direction: column; align-items: flex-end; font-size: 11.5px; line-height: 16px; }
```
